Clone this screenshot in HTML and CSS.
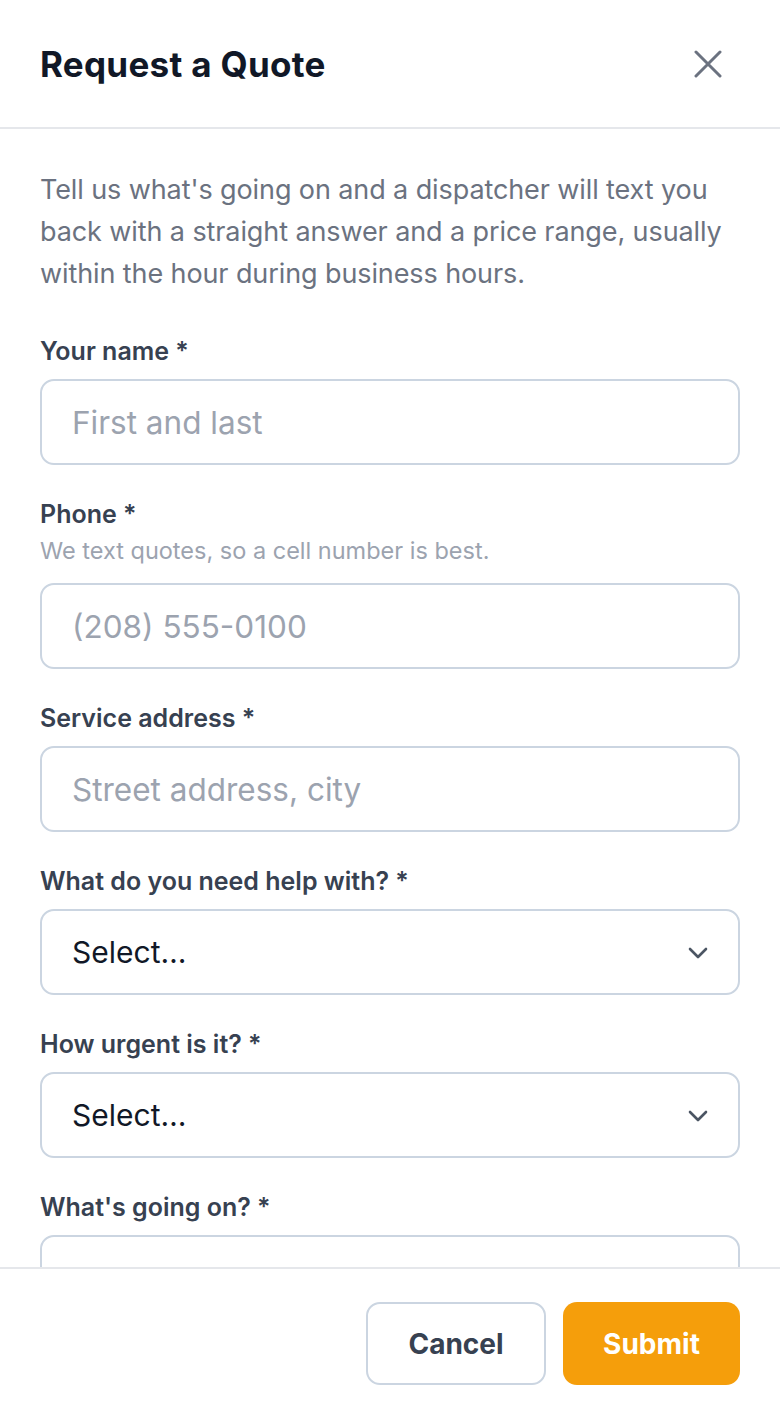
FILE: index.html
```html
<!DOCTYPE html>
<html lang="en">

<head>
    <meta charset="UTF-8">
    <meta name="viewport" content="width=device-width, initial-scale=1.0">
    <title>Request a Quote</title>
    <link rel="stylesheet" href="styles.css">
</head>

<body>
    <div class="modal">
        <div class="modal-header">
            <h1>Request a Quote</h1>
            <button class="close" aria-label="Close">
                <svg width="28" height="28" viewBox="0 0 28 28" fill="none" stroke="currentColor" stroke-width="3" stroke-linecap="round">
                    <path d="M2 2 L26 26 M26 2 L2 26" />
                </svg>
            </button>
        </div>

        <div class="modal-body">
            <p class="intro">Tell us what's going on and a dispatcher will text you back with a straight answer and a price range, usually within the hour during business hours.</p>

            <div class="field">
                <label for="name">Your name *</label>
                <input id="name" type="text" placeholder="First and last">
            </div>

            <div class="field">
                <label for="phone">Phone *</label>
                <div class="hint">We text quotes, so a cell number is best.</div>
                <input id="phone" type="tel" placeholder="(208) 555-0100">
            </div>

            <div class="field">
                <label for="address">Service address *</label>
                <input id="address" type="text" placeholder="Street address, city">
            </div>

            <div class="field">
                <label for="service">What do you need help with? *</label>
                <div class="select">
                    <select id="service">
                        <option>Select…</option>
                    </select>
                    <svg class="chevron" width="20" height="12" viewBox="0 0 20 12" fill="none" stroke="currentColor" stroke-width="2.6" stroke-linecap="round" stroke-linejoin="round">
                        <path d="M2 2 L10 10 L18 2" />
                    </svg>
                </div>
            </div>

            <div class="field">
                <label for="urgency">How urgent is it? *</label>
                <div class="select">
                    <select id="urgency">
                        <option>Select…</option>
                    </select>
                    <svg class="chevron" width="20" height="12" viewBox="0 0 20 12" fill="none" stroke="currentColor" stroke-width="2.6" stroke-linecap="round" stroke-linejoin="round">
                        <path d="M2 2 L10 10 L18 2" />
                    </svg>
                </div>
            </div>

            <div class="field">
                <label for="details">What's going on? *</label>
                <textarea id="details" rows="4" placeholder="The more you can tell us, the better. What happened and when?"></textarea>
            </div>
        </div>

        <div class="modal-footer">
            <button class="btn btn-cancel">Cancel</button>
            <button class="btn btn-submit">Submit</button>
        </div>
    </div>
</body>

</html>
```

FILE: styles.css
```css
* {
    box-sizing: border-box;
}

body {
    margin: 0px;
    padding: 0px;
    background-color: white;
    font-family: "Inter", "Noto Sans", sans-serif;
}

.modal {
    height: 100vh;
    display: flex;
    flex-direction: column;
    background-color: white;
}

.modal-header {
    height: 129px;
    flex-shrink: 0;
    display: flex;
    align-items: center;
    justify-content: space-between;
    padding: 0 58px 0 40px;
    border-bottom: 2px solid #e5e7eb;
}

.modal-header h1 {
    margin: 0;
    font-size: 35px;
    font-weight: 700;
    color: #111827;
    letter-spacing: 0.3px;
}

.close {
    background: none;
    border: none;
    padding: 0;
    color: #6b7280;
    display: flex;
    cursor: pointer;
}

.modal-body {
    flex: 1;
    overflow: hidden;
    padding: 40px 40px 0 40px;
}

.intro {
    margin: 0 0 40px 0;
    font-size: 27px;
    line-height: 42px;
    color: #6b7280;
    letter-spacing: -0.1px;
}

.field {
    display: flex;
    flex-direction: column;
    margin-bottom: 33px;
}

.field label {
    font-size: 25px;
    line-height: 30px;
    font-weight: 600;
    color: #374151;
    margin: 1px 0 13px 0;
}

.hint {
    font-size: 23.5px;
    line-height: 28px;
    color: #9ca3af;
    margin: -5px 0 18px 0;
}

.field input,
.field select,
.field textarea {
    width: 100%;
    height: 86px;
    border: 2px solid #cbd5e1;
    border-radius: 14px;
    padding: 0 30px;
    font-family: inherit;
    font-size: 31.5px;
    color: #111827;
    background-color: white;
    outline: none;
}

.field select {
    font-size: 30px;
    appearance: none;
    -webkit-appearance: none;
}

.field textarea {
    height: 160px;
    padding: 25px 30px;
    line-height: 40px;
    resize: none;
}

.field input::placeholder,
.field textarea::placeholder {
    color: #9ca3af;
}

.select {
    position: relative;
}

.chevron {
    position: absolute;
    right: 32px;
    top: 38px;
    color: #4b5563;
    pointer-events: none;
}

.modal-footer {
    flex-shrink: 0;
    display: flex;
    justify-content: flex-end;
    gap: 17px;
    padding: 33px 40px 33px 40px;
    border-top: 2px solid #e5e7eb;
}

.btn {
    height: 83px;
    border-radius: 14px;
    font-family: inherit;
    font-size: 28px;
    font-weight: 700;
    cursor: pointer;
}

.btn-cancel {
    width: 180px;
    background-color: white;
    border: 2px solid #cbd5e1;
    color: #374151;
}

.btn-submit {
    width: 177px;
    background-color: #f59e0b;
    border: none;
    color: white;
}
```
